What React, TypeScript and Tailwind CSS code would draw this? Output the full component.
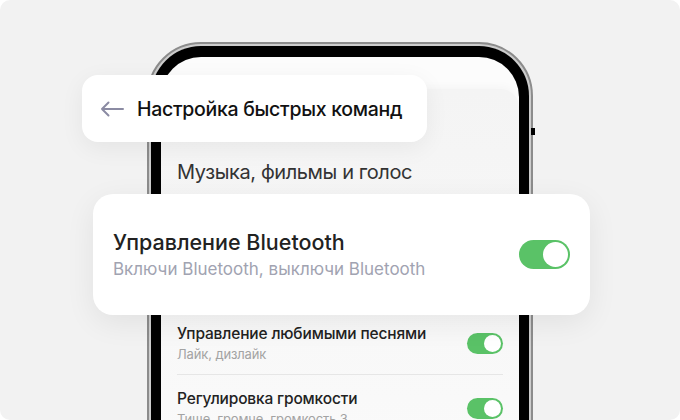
import type { ReactNode } from "react";

type ToggleProps = { size?: "sm" | "lg" };

function Toggle({ size = "sm" }: ToggleProps) {
  if (size === "lg") {
    return (
      <div className="flex h-[29px] w-[51px] shrink-0 items-center justify-end rounded-full bg-[#5ac267] pr-[2px]">
        <div className="h-[25px] w-[25px] rounded-full bg-white" />
      </div>
    );
  }
  return (
    <div className="flex h-[21px] w-[36px] shrink-0 items-center justify-end rounded-full bg-[#5ac267] pr-[2px]">
      <div className="h-[17px] w-[17px] rounded-full bg-white" />
    </div>
  );
}

function Row({ title, hint, last }: { title: string; hint: string; last?: boolean }) {
  return (
    <div className={last ? "flex items-center justify-between pt-[14px]" : "flex items-center justify-between border-b border-[#e6e6e6] pb-[12px]"}>
      <div>
        <div className="text-[15.5px] font-medium leading-[20px] tracking-[-0.01em] text-[#222]">{title}</div>
        <div className="mt-[2px] text-[13px] leading-[16px] tracking-[-0.01em] text-[#a3a3a3]">{hint}</div>
      </div>
      <Toggle />
    </div>
  );
}

function FloatCard({ className, children }: { className: string; children: ReactNode }) {
  return <div className={"absolute bg-white " + className}>{children}</div>;
}

export default function App() {
  return (
    <div className="h-[420px] w-[680px] bg-white font-['Inter',sans-serif]">
      <div className="relative h-full w-full overflow-hidden rounded-[10px] bg-[#f2f2f2]">
        {/* phone */}
        <div className="ml-[147px] mt-[42px] h-[420px] w-[386px] rounded-t-[54px] border-2 border-[#8c8c8c] bg-[#cdcdcd] p-[2px]">
          <div className="relative h-full rounded-t-[50px] bg-black px-[10px] pt-[11px]">
            <div className="absolute right-[-6px] top-[82px] h-[7px] w-[4px] bg-black" />
            <div className="h-full overflow-hidden rounded-t-[40px] bg-[#fcfcfc] pt-[32px]">
              <div className="h-full rounded-t-[18px] bg-gradient-to-b from-[#f4f4f4] to-[#fafafa] px-[16px] pt-[71px] shadow-[0_-2px_10px_rgba(0,0,0,0.03)]">
                <div className="text-[20px] leading-[24px] tracking-[-0.02em] text-[#333]">Музыка, фильмы и голос</div>
                <div className="mt-[140px]">
                  <Row title="Управление любимыми песнями" hint="Лайк, дизлайк" />
                  <Row title="Регулировка громкости" hint="Тише, громче, громкость 3" last />
                </div>
              </div>
            </div>
          </div>
        </div>

        {/* header overlay */}
        <FloatCard className="left-[82px] top-[75px] flex h-[67px] w-[345px] items-center gap-[13px] rounded-[16px] pl-[18px] shadow-[0_6px_24px_rgba(0,0,0,0.06)]">
          <svg width="24" height="16" viewBox="0 0 24 16" fill="none" stroke="#8b8ba3" strokeWidth="2" strokeLinecap="round" strokeLinejoin="round">
            <path d="M23 8H2M8.5 1.5L2 8l6.5 6.5" />
          </svg>
          <span className="text-[19.5px] font-medium leading-[24px] tracking-[-0.015em] text-[#111]">Настройка быстрых команд</span>
        </FloatCard>

        {/* bluetooth overlay */}
        <FloatCard className="left-[93px] top-[194px] flex h-[121px] w-[497px] items-center justify-between rounded-[20px] px-[20px] shadow-[0_8px_30px_rgba(0,0,0,0.07)]">
          <div>
            <div className="text-[21.5px] font-medium leading-[26px] text-[#222]">Управление Bluetooth</div>
            <div className="mt-[3px] text-[17px] leading-[22px] text-[#a1a3b1]">Включи Bluetooth, выключи Bluetooth</div>
          </div>
          <Toggle size="lg" />
        </FloatCard>
      </div>
    </div>
  );
}
